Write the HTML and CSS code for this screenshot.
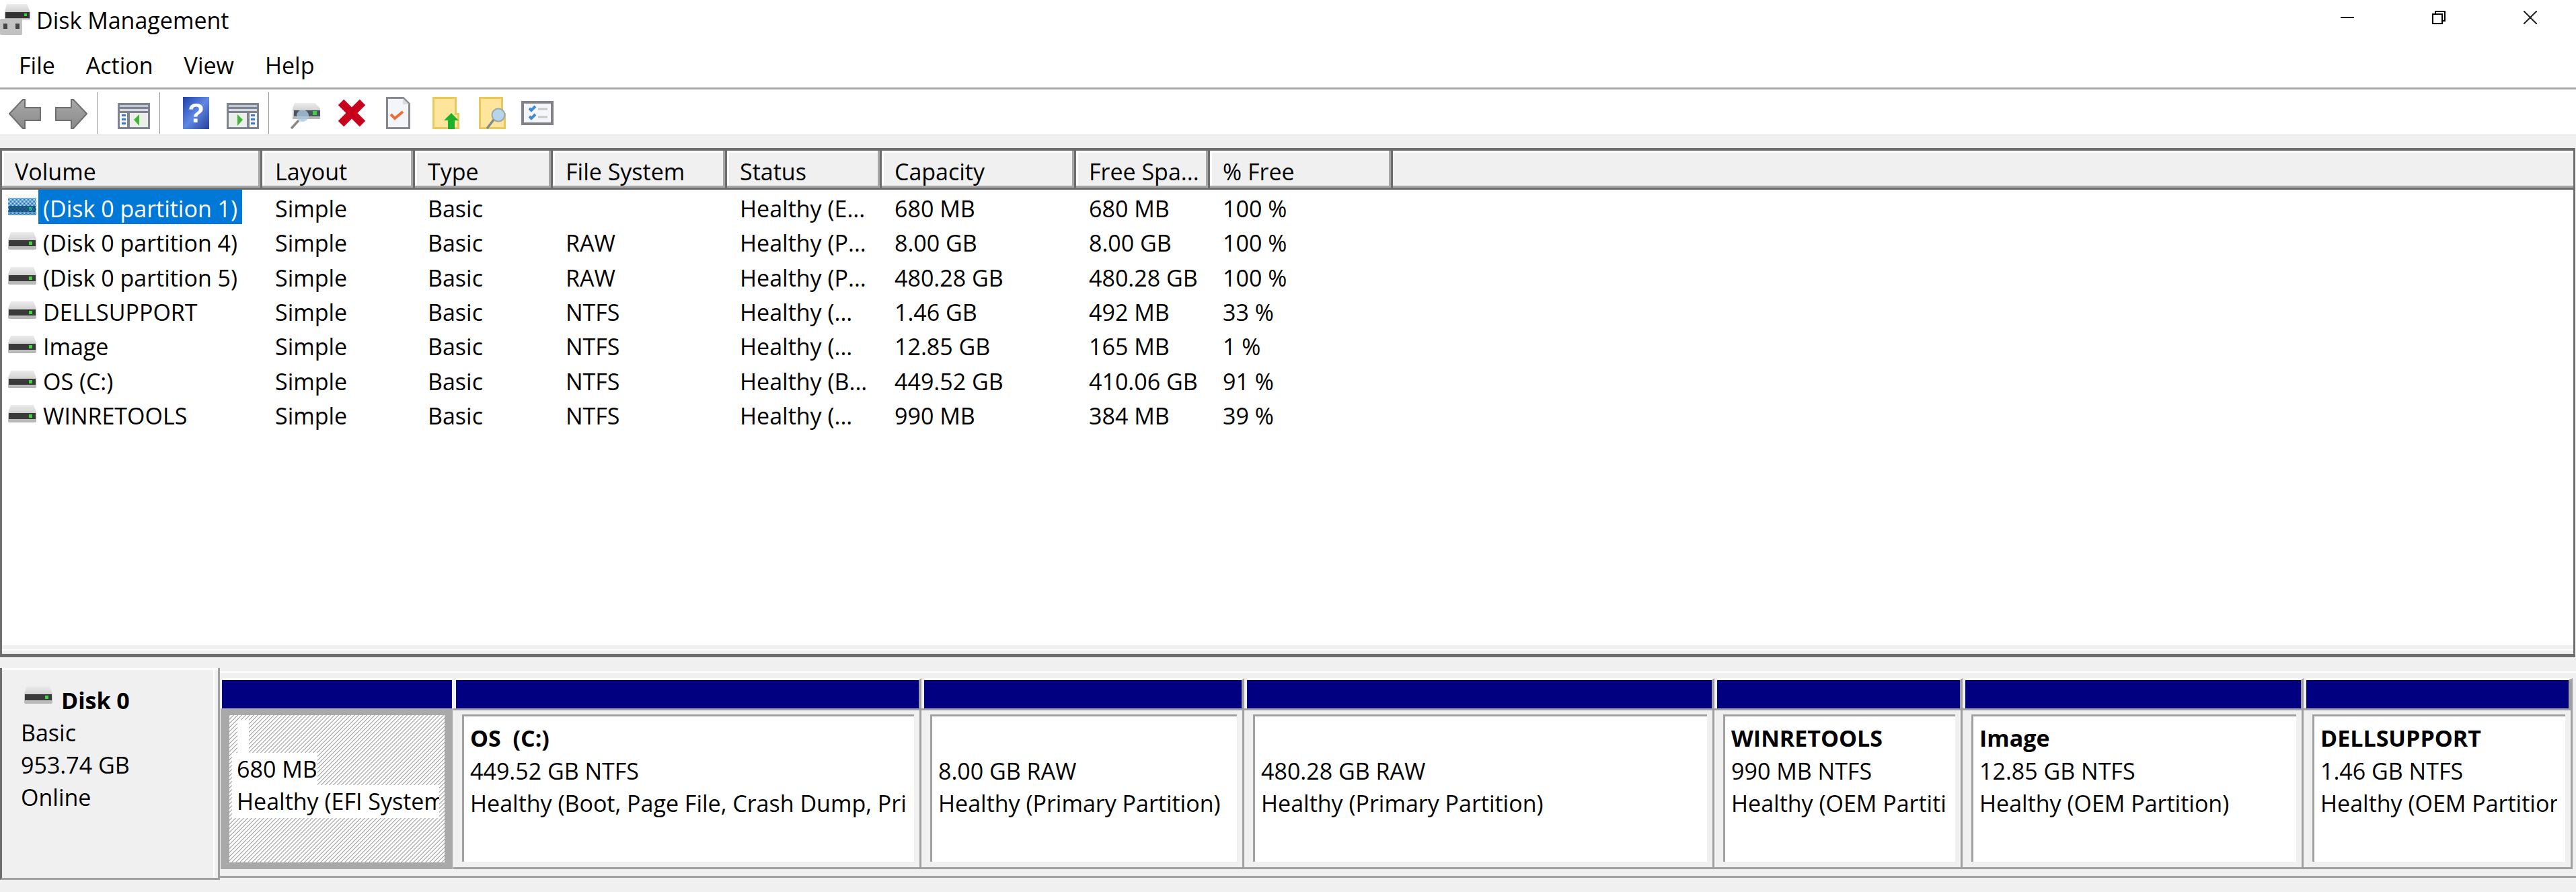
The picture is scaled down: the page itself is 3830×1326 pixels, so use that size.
FILE: index.html
```html
<!DOCTYPE html>
<html lang="en">
<head>
    <meta charset="UTF-8">
    <title>Disk Management</title>
    <link rel="stylesheet" href="styles.css">
</head>
<body>
    <svg class="defs" width="0" height="0">
        <defs>
            <linearGradient id="silver" x1="0" y1="0" x2="0" y2="1">
                <stop offset="0" stop-color="#ececec"/>
                <stop offset="1" stop-color="#b4b4b4"/>
            </linearGradient>
            <linearGradient id="arrow" x1="0" y1="0" x2="0" y2="1">
                <stop offset="0" stop-color="#a8a8a8"/>
                <stop offset="1" stop-color="#8a8a8a"/>
            </linearGradient>
            <linearGradient id="helpblue" x1="0" y1="0" x2="1" y2="1">
                <stop offset="0" stop-color="#1f3fa8"/>
                <stop offset="0.5" stop-color="#5f88e2"/>
                <stop offset="1" stop-color="#23409c"/>
            </linearGradient>
            <pattern id="dither" width="2" height="2" patternUnits="userSpaceOnUse">
                <rect width="1" height="1" fill="#0078d7"/>
                <rect x="1" y="1" width="1" height="1" fill="#0078d7"/>
            </pattern>
            <symbol id="drive" viewBox="0 0 42 26">
                <path d="M4 0h34l4 11v13a2 2 0 0 1-2 2H2a2 2 0 0 1-2-2V11z" fill="url(#silver)"/>
                <rect x="1" y="12" width="40" height="9" fill="#3a3a3a"/>
                <rect x="31" y="14" width="5" height="5" fill="#3fd63f"/>
            </symbol>
            <symbol id="pane" viewBox="0 0 48 39">
                <rect width="48" height="39" fill="#7d8490"/>
                <rect x="3" y="3" width="42" height="3" fill="#c4cad4"/>
                <rect x="3" y="9" width="42" height="3" fill="#d8dce2"/>
                <rect x="3" y="15" width="11" height="21" fill="#f4f6fa"/>
                <rect x="18" y="15" width="27" height="21" fill="#ecefe9"/>
                <rect x="6" y="17" width="6" height="3" fill="#3f74c4"/>
                <rect x="6" y="23" width="6" height="3" fill="#3f74c4"/>
                <rect x="6" y="29" width="6" height="3" fill="#3f74c4"/>
                <path d="M24 25l8-8v17z" fill="#3fb53a"/>
            </symbol>
        </defs>
    </svg>

    <div class="window">
        <header class="titlebar">
            <svg class="app-icon" width="48" height="48" viewBox="0 0 48 48">
                <path d="M10 0h30l5 12v11H7V12z" fill="url(#silver)"/>
                <rect x="8" y="12" width="36" height="9" fill="#333"/>
                <rect x="36" y="14" width="4" height="4" fill="#39d23a"/>
                <rect x="0" y="22" width="33" height="24" rx="2" fill="#c2c2c2"/>
                <rect x="5" y="29" width="6" height="8" fill="#444"/>
                <rect x="23" y="29" width="6" height="8" fill="#444"/>
            </svg>
            <span class="title">Disk Management</span>
            <div class="win-controls">
                <span class="win-btn"><svg width="20" height="20" viewBox="0 0 20 20"><path d="M0 10h20" stroke="#000" stroke-width="2"/></svg></span>
                <span class="win-btn"><svg width="20" height="20" viewBox="0 0 20 20" fill="none" stroke="#000" stroke-width="2"><rect x="1" y="5" width="14" height="14"/><path d="M5 5V1h14v14h-4"/></svg></span>
                <span class="win-btn"><svg width="20" height="20" viewBox="0 0 20 20"><path d="M0 0l20 20M20 0L0 20" stroke="#222" stroke-width="2"/></svg></span>
            </div>
        </header>

        <nav class="menubar">
            <span class="menu-item">File</span>
            <span class="menu-item">Action</span>
            <span class="menu-item">View</span>
            <span class="menu-item">Help</span>
        </nav>

        <div class="toolbar">
            <span class="tool"><svg width="48" height="48" viewBox="0 0 48 48"><path d="M1 25L21 4h3v12h23v19H24v12h-3z" fill="url(#arrow)" stroke="#6f6f6f" stroke-width="2"/></svg></span>
            <span class="tool"><svg width="48" height="48" viewBox="0 0 48 48"><path d="M47 25L27 4h-3v12H1v19h23v12h3z" fill="url(#arrow)" stroke="#6f6f6f" stroke-width="2"/></svg></span>
            <span class="tool-sep"></span>
            <span class="tool"><svg width="48" height="48" viewBox="0 0 48 48"><use href="#pane" x="0" y="9" width="48" height="39"/></svg></span>
            <span class="tool-sep"></span>
            <span class="tool"><svg width="48" height="48" viewBox="0 0 48 48"><rect x="4" width="39" height="48" fill="url(#helpblue)"/><text class="help-mark" x="23.5" y="38">?</text></svg></span>
            <span class="tool"><svg width="48" height="48" viewBox="0 0 48 48"><g transform="matrix(-1 0 0 1 48 0)"><use href="#pane" x="0" y="9" width="48" height="39"/></g></svg></span>
            <span class="tool-sep"></span>
            <span class="tool"><svg width="48" height="48" viewBox="0 0 48 48"><path d="M8 9h30l8 8v16H5V17z" fill="url(#silver)"/><rect x="7" y="20" width="39" height="9" fill="#4a5560"/><rect x="35" y="21" width="6" height="6" fill="#39d23a"/><circle cx="20" cy="28" r="9" fill="#a9c8de" fill-opacity=".8"/><path d="M14 35L3 47" stroke="#8a8a8a" stroke-width="3.5"/></svg></span>
            <span class="tool"><svg width="48" height="48" viewBox="0 0 48 48"><path d="M8 8l32 32M40 8L8 40" stroke="#c9001c" stroke-width="12"/></svg></span>
            <span class="tool"><svg width="48" height="48" viewBox="0 0 48 48"><path d="M7.500 1.500h24l9 9v36h-33z" fill="#f3f5fa" stroke="#85888c" stroke-width="3"/><path d="M31 2v9h9z" fill="#d8dade"/><path d="M13 26l6 6 12-10" fill="none" stroke="#ee6d35" stroke-width="4"/></svg></span>
            <span class="tool"><svg width="48" height="48" viewBox="0 0 48 48"><path d="M7.500 1.500h33v24h4v21h-37z" fill="#fde69b" stroke="#e9c95c" stroke-width="3"/><path d="M34 24l11 11h-6v13H29V35h-6z" fill="#1fb02c"/></svg></span>
            <span class="tool"><svg width="48" height="48" viewBox="0 0 48 48"><path d="M7.500 1.500h33v24h4v21h-37z" fill="#fde69b" stroke="#e9c95c" stroke-width="3"/><circle cx="35" cy="27" r="9.500" fill="#b7d5e8" stroke="#9aa7ad" stroke-width="2"/><path d="M28 34L18 47" stroke="#7f8a8c" stroke-width="3.500"/></svg></span>
            <span class="tool"><svg width="48" height="48" viewBox="0 0 48 48"><rect x="2" y="8" width="44" height="32" fill="#f4f6fb" stroke="#808285" stroke-width="4"/><path d="M12 17l3 3 6-6M12 29l3 3 6-6" fill="none" stroke="#3f8ad6" stroke-width="4"/><path d="M25 18h14M25 30h14" stroke="#c8c8c8" stroke-width="3"/></svg></span>
        </div>
        <div class="toolbar-gap"></div>

        <section class="volume-pane">
            <div class="vol-head">
                <div class="head-cell">Volume</div>
                <div class="head-cell">Layout</div>
                <div class="head-cell">Type</div>
                <div class="head-cell">File System</div>
                <div class="head-cell">Status</div>
                <div class="head-cell">Capacity</div>
                <div class="head-cell">Free Spa...</div>
                <div class="head-cell">% Free</div>
                <div class="head-cell head-rest"></div>
            </div>
            <div class="vol-list">
                <div class="vol-row">
                    <div class="vol-name">
                        <svg class="drive-icon" width="42" height="26"><use href="#drive"/><rect width="42" height="26" fill="url(#dither)"/></svg>
                        <span class="name-text selected">(Disk 0 partition 1)</span>
                    </div>
                    <div>Simple</div><div>Basic</div><div></div><div>Healthy (E...</div><div>680 MB</div><div>680 MB</div><div>100 %</div>
                </div>
                <div class="vol-row">
                    <div class="vol-name"><svg class="drive-icon" width="42" height="26"><use href="#drive"/></svg><span class="name-text">(Disk 0 partition 4)</span></div>
                    <div>Simple</div><div>Basic</div><div>RAW</div><div>Healthy (P...</div><div>8.00 GB</div><div>8.00 GB</div><div>100 %</div>
                </div>
                <div class="vol-row">
                    <div class="vol-name"><svg class="drive-icon" width="42" height="26"><use href="#drive"/></svg><span class="name-text">(Disk 0 partition 5)</span></div>
                    <div>Simple</div><div>Basic</div><div>RAW</div><div>Healthy (P...</div><div>480.28 GB</div><div>480.28 GB</div><div>100 %</div>
                </div>
                <div class="vol-row">
                    <div class="vol-name"><svg class="drive-icon" width="42" height="26"><use href="#drive"/></svg><span class="name-text">DELLSUPPORT</span></div>
                    <div>Simple</div><div>Basic</div><div>NTFS</div><div>Healthy (...</div><div>1.46 GB</div><div>492 MB</div><div>33 %</div>
                </div>
                <div class="vol-row">
                    <div class="vol-name"><svg class="drive-icon" width="42" height="26"><use href="#drive"/></svg><span class="name-text">Image</span></div>
                    <div>Simple</div><div>Basic</div><div>NTFS</div><div>Healthy (...</div><div>12.85 GB</div><div>165 MB</div><div>1 %</div>
                </div>
                <div class="vol-row">
                    <div class="vol-name"><svg class="drive-icon" width="42" height="26"><use href="#drive"/></svg><span class="name-text">OS (C:)</span></div>
                    <div>Simple</div><div>Basic</div><div>NTFS</div><div>Healthy (B...</div><div>449.52 GB</div><div>410.06 GB</div><div>91 %</div>
                </div>
                <div class="vol-row">
                    <div class="vol-name"><svg class="drive-icon" width="42" height="26"><use href="#drive"/></svg><span class="name-text">WINRETOOLS</span></div>
                    <div>Simple</div><div>Basic</div><div>NTFS</div><div>Healthy (...</div><div>990 MB</div><div>384 MB</div><div>39 %</div>
                </div>
            </div>
            <div class="splitter"></div>
        </section>

        <section class="disk-pane">
            <div class="disk-row">
                <div class="disk-info">
                    <div class="disk-title">
                        <svg class="drive-icon" width="42" height="26"><use href="#drive"/></svg>
                        <strong>Disk 0</strong>
                    </div>
                    <div>Basic</div>
                    <div>953.74 GB</div>
                    <div>Online</div>
                </div>
                <div class="parts">
                    <div class="part part-selected">
                        <div class="part-bar"></div>
                        <div class="part-body">
                            <div class="part-inner hatch">
                                <div class="blank-label">&nbsp;</div>
                                <div><span class="white-label">680 MB</span></div>
                                <div><span class="white-label">Healthy (EFI System</span></div>
                            </div>
                        </div>
                    </div>
                    <div class="part">
                        <div class="part-bar"></div>
                        <div class="part-body">
                            <div class="part-inner">
                                <div class="part-name">OS&nbsp; (C:)</div>
                                <div>449.52 GB NTFS</div>
                                <div>Healthy (Boot, Page File, Crash Dump, Pri</div>
                            </div>
                        </div>
                    </div>
                    <div class="part">
                        <div class="part-bar"></div>
                        <div class="part-body">
                            <div class="part-inner">
                                <div class="part-name">&nbsp;</div>
                                <div>8.00 GB RAW</div>
                                <div>Healthy (Primary Partition)</div>
                            </div>
                        </div>
                    </div>
                    <div class="part">
                        <div class="part-bar"></div>
                        <div class="part-body">
                            <div class="part-inner">
                                <div class="part-name">&nbsp;</div>
                                <div>480.28 GB RAW</div>
                                <div>Healthy (Primary Partition)</div>
                            </div>
                        </div>
                    </div>
                    <div class="part">
                        <div class="part-bar"></div>
                        <div class="part-body">
                            <div class="part-inner">
                                <div class="part-name">WINRETOOLS</div>
                                <div>990 MB NTFS</div>
                                <div>Healthy (OEM Partiti</div>
                            </div>
                        </div>
                    </div>
                    <div class="part">
                        <div class="part-bar"></div>
                        <div class="part-body">
                            <div class="part-inner">
                                <div class="part-name">Image</div>
                                <div>12.85 GB NTFS</div>
                                <div>Healthy (OEM Partition)</div>
                            </div>
                        </div>
                    </div>
                    <div class="part">
                        <div class="part-bar"></div>
                        <div class="part-body">
                            <div class="part-inner">
                                <div class="part-name">DELLSUPPORT</div>
                                <div>1.46 GB NTFS</div>
                                <div>Healthy (OEM Partition</div>
                            </div>
                        </div>
                    </div>
                </div>
            </div>
        </section>
    </div>
</body>
</html>
```

FILE: styles.css
```css
html, body {
    margin: 0;
    height: 100%;
    overflow: hidden;
}
body {
    font-family: "Open Sans", "Noto Sans", sans-serif;
    font-size: 34px;
    color: #000;
    background-color: #fff;
}
.defs {
    display: block;
    height: 0;
}
.window {
    display: flex;
    flex-direction: column;
    height: 1326px;
}

/* title bar */
.titlebar {
    display: flex;
    height: 62px;
}
.app-icon {
    margin-top: 6px;
    margin-right: 6px;
}
.title {
    line-height: 60px;
}
.win-controls {
    display: flex;
    margin-left: auto;
}
.win-btn {
    width: 136px;
    height: 52px;
    display: flex;
    align-items: center;
    justify-content: center;
}

/* menu */
.menubar {
    display: flex;
    height: 68px;
    padding-left: 5px;
    line-height: 71px;
    border-bottom: 3px solid #a9a9a9;
}
.menu-item {
    padding: 0 23px;
}

/* toolbar */
.toolbar {
    display: flex;
    height: 67px;
    padding-left: 2px;
    border-bottom: 1px solid #dcdcdc;
}
.tool {
    width: 69px;
    padding-top: 11px;
    text-align: center;
}
.tool-sep {
    width: 1px;
    height: 62px;
    margin: 4px 19px 0 4px;
    background-color: #999;
}
.help-mark {
    font-family: "Liberation Sans", sans-serif;
    font-size: 40px;
    font-weight: bold;
    text-anchor: middle;
    fill: #fff;
}
.toolbar-gap {
    height: 19px;
    background-color: #f0f0f0;
}

/* volume list */
.volume-pane {
    height: 753px;
    margin-right: 1px;
    border: solid #6d6d6d;
    border-width: 4px 3px 0 3px;
    display: flex;
    flex-direction: column;
}
.vol-head, .vol-row {
    display: grid;
    grid-template-columns: 387px 227px 205px 259px 230px 289px 199px 272px 1fr;
}
.vol-head {
    height: 58px;
    flex-shrink: 0;
}
.head-cell {
    padding: 7px 0 0 19px;
    line-height: 48px;
    white-space: nowrap;
    background-color: #f0f0f0;
    border-right: 3px solid #6d6d6d;
    border-bottom: 3px solid #6d6d6d;
    box-shadow: inset -3px -3px 0 #a6a6a6, inset 3px 3px 0 #fff;
}
.head-rest {
    border-right: 0;
    box-shadow: inset 0 -3px 0 #a6a6a6, inset 0 3px 0 #fff;
}
.vol-list {
    flex: 1;
    background-color: #fff;
}
.vol-row {
    height: 51.33px;
    line-height: 57px;
    white-space: nowrap;
}
.vol-row > div {
    height: 51px;
    padding-left: 19px;
    overflow: hidden;
}
.vol-row > .vol-name {
    display: flex;
    align-items: flex-start;
    padding-left: 9px;
}
.drive-icon {
    flex-shrink: 0;
    margin-top: 12px;
}
.name-text {
    display: block;
    height: 51px;
    margin-left: 3px;
    padding: 0 7px;
}
.selected {
    background-color: #0078d7;
    color: #fff;
}
.splitter {
    height: 18px;
    flex-shrink: 0;
    box-sizing: border-box;
    background-color: #f0f0f0;
    border-top: 6px solid #f0f0f0;
    border-bottom: 5px solid #6d6d6d;
    box-shadow: inset 0 2px 0 #fff;
}

/* disk map */
.disk-pane {
    flex: 1;
    background-color: #f0f0f0;
    padding-top: 16px;
}
.disk-row {
    display: flex;
    align-items: flex-start;
}
.disk-info {
    width: 327px;
    flex-shrink: 0;
    height: 315px;
    box-sizing: border-box;
    padding: 24px 0 0 28px;
    line-height: 48px;
    border-left: 3px solid #6d6d6d;
    border-right: 3px solid #a0a0a0;
    border-bottom: 3px solid #a0a0a0;
    box-shadow: inset 0 3px 0 #fff, inset -5px 0 0 #f0f0f0, inset -7px 0 0 #fff;
}
.disk-title {
    display: flex;
    padding-left: 5px;
}
.disk-title .drive-icon {
    margin-top: 3px;
    margin-right: 13px;
}
.parts {
    flex: 1;
    min-width: 0;
    margin-top: 5px;
    padding: 8px 0 10px;
    border-top: 2px solid #fff;
    border-bottom: 3px solid #a0a0a0;
    display: grid;
    grid-template-columns: 347px 696px 480px 699px 369px 507px 400px 5px;
}
.part {
    display: flex;
    flex-direction: column;
    height: 284px;
    min-width: 0;
}
.part-bar {
    height: 42px;
    margin-left: 4px;
    background-color: #000080;
    border-top: 3px solid #fafafa;
    border-right: 4px solid #a0a0a0;
}
.part:last-child .part-bar {
    border-right-width: 6px;
}
.part-body {
    flex: 1;
    min-height: 0;
    padding: 6px 8px 8px 13px;
    border: solid #a0a0a0;
    border-width: 3px 3px 3px 0;
    display: flex;
}
.part-inner {
    flex: 1;
    min-width: 0;
    padding: 8px 12px 0 12px;
    line-height: 48.5px;
    white-space: nowrap;
    background-color: #fff;
    border-top: 3px solid #a0a0a0;
    box-shadow: inset 3px 0 0 #a0a0a0;
}
.part-inner > div {
    overflow: hidden;
}
.part-name {
    font-weight: bold;
}

/* selected partition, hatched */
.part-selected .part-bar {
    margin-left: 3px;
    margin-right: 2px;
    border-right: 0;
}
.part-selected .part-body {
    padding: 0;
    border: solid #a9a9a9;
    border-width: 10px 12px 10px 13px;
    margin-right: 1px;
    margin-left: 1px;
}
.hatch {
    border: 0;
    box-shadow: none;
    padding: 7px 8px 0 4px;
    background: linear-gradient(135deg, #b8b8b8 10%, #fff 10%, #fff 50%, #b8b8b8 50%, #b8b8b8 60%, #fff 60%);
    background-size: 6px 6px;
}
.white-label {
    display: inline-block;
    padding-left: 7px;
    background-color: #fff;
}
.blank-label {
    width: 17px;
    margin-left: 8px;
    background-color: #fff;
}
```
